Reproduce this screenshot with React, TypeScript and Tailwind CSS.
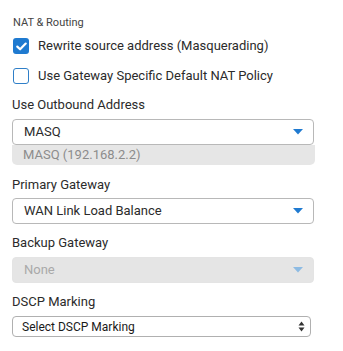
import React from "react";

function Caret({ color }: { color: string }) {
  return (
    <svg width="10" height="6" viewBox="0 0 10 6" className="shrink-0">
      <path d="M0 0 L10 0 L5 5.5 Z" fill={color} />
    </svg>
  );
}

function Check({ checked, label }: { checked: boolean; label: string }) {
  return (
    <div className="flex items-center gap-[9px] h-[16px]">
      {checked ? (
        <div className="w-[16px] h-[16px] rounded-[3px] bg-[#1f7ad0] flex items-center justify-center">
          <svg width="11" height="9" viewBox="0 0 11 9">
            <path d="M1.3 4.6 L4.1 7.3 L9.7 1.6" stroke="white" strokeWidth="2.2" fill="none" strokeLinecap="round" strokeLinejoin="round" />
          </svg>
        </div>
      ) : (
        <div className="w-[16px] h-[16px] rounded-[3px] border-[1.5px] border-[#2f7fc8] bg-white" />
      )}
      <span className="text-[13px] text-[#2b2b2b]">{label}</span>
    </div>
  );
}

function Select({ value, disabled }: { value: string; disabled?: boolean }) {
  return (
    <div
      className={
        disabled
          ? "h-[26px] w-[302px] rounded-[4px] border border-[#e4e4e4] bg-[#e5e5e5] flex items-center justify-between pl-[11px] pr-[10px]"
          : "h-[26px] w-[302px] rounded-[4px] border border-[#b8b8b8] bg-white flex items-center justify-between pl-[11px] pr-[10px]"
      }
    >
      <span className={disabled ? "text-[13px] text-[#a9a9a9]" : "text-[13px] text-[#2b2b2b]"}>{value}</span>
      <Caret color={disabled ? "#8dbbe3" : "#1f7ad0"} />
    </div>
  );
}

export default function App() {
  return (
    <div
      className="w-[343px] h-[351px] bg-white pl-[12px] pt-[16px]"
      style={{ fontFamily: "Roboto, 'Liberation Sans', sans-serif" }}
    >
      <div className="text-[11px] text-[#444] leading-[13px] pl-[1px]">NAT &amp; Routing</div>
      <div className="flex flex-col gap-[14px] mt-[9px] pl-[1px]">
        <Check checked label="Rewrite source address (Masquerading)" />
        <Check checked={false} label="Use Gateway Specific Default NAT Policy" />
      </div>
      <div className="text-[13px] text-[#2b2b2b] leading-[16px] mt-[13px]">Use Outbound Address</div>
      <div className="mt-[6px]">
        <Select value="MASQ" />
        <div className="h-[20px] w-[303px] rounded-b-[5px] bg-[#e6e6e6] flex items-center pl-[11px] text-[13px] text-[#8c8c8c]">
          MASQ (192.168.2.2)
        </div>
      </div>
      <div className="text-[13px] text-[#2b2b2b] leading-[16px] mt-[12px]">Primary Gateway</div>
      <div className="mt-[5px]">
        <Select value="WAN Link Load Balance" />
      </div>
      <div className="text-[13px] text-[#2b2b2b] leading-[16px] mt-[11px]">Backup Gateway</div>
      <div className="mt-[6px]">
        <Select value="None" disabled />
      </div>
      <div className="text-[13px] text-[#2b2b2b] leading-[16px] mt-[11px]">DSCP Marking</div>
      <div className="mt-[6px] h-[21px] w-[299px] rounded-[4px] border border-[#b0b0b0] bg-white flex items-center justify-between pl-[9px] pr-[5px]">
        <span className="text-[12px] text-[#1a1a1a]">Select DSCP Marking</span>
        <svg width="7" height="11" viewBox="0 0 7 11">
          <path d="M0.5 4.5 L3.5 0.5 L6.5 4.5 Z" fill="#333" />
          <path d="M0.5 6.5 L3.5 10.5 L6.5 6.5 Z" fill="#333" />
        </svg>
      </div>
    </div>
  );
}
